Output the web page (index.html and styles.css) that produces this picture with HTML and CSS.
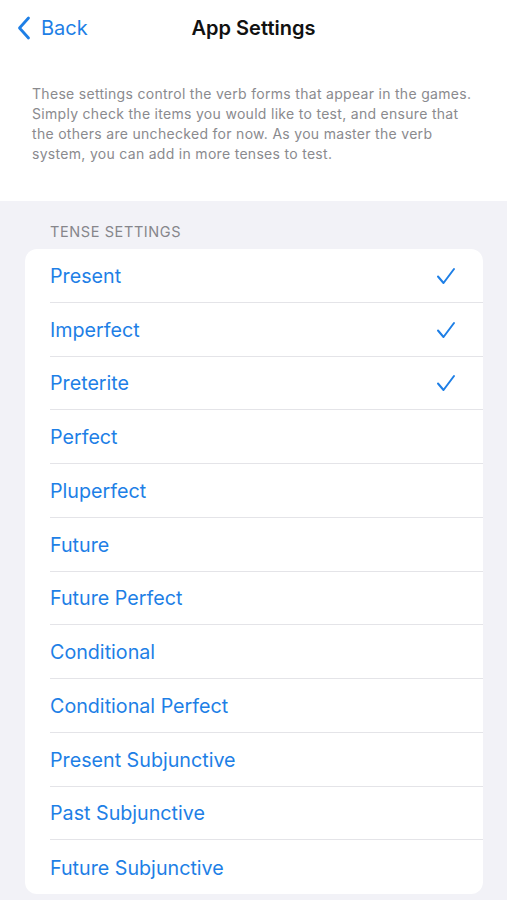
FILE: index.html
```html
<!DOCTYPE html>
<html>
<head>
<meta charset="utf-8">
<link rel="stylesheet" href="styles.css">
</head>
<body>
<div class="top">
  <nav class="nav">
    <a class="back">
      <svg class="chev" width="14" height="24" viewBox="0 0 14 24"><path d="M11.5 2 L2.5 12 L11.5 22" fill="none" stroke="currentColor" stroke-width="2.8" stroke-linecap="round" stroke-linejoin="round"/></svg>
      <span>Back</span>
    </a>
    <h1 class="title">App Settings</h1>
  </nav>
  <p class="desc">These settings control the verb forms that appear in the games.<br>Simply check the items you would like to test, and ensure that<br>the others are unchecked for now. As you master the verb<br>system, you can add in more tenses to test.</p>
</div>
<main class="content">
  <div class="section-title">TENSE SETTINGS</div>
  <ul class="list">
    <li class="row"><span>Present</span><svg class="check" width="20" height="18" viewBox="0 0 20 18"><path d="M2 9.5 L7.5 16 L18 2" fill="none" stroke="currentColor" stroke-width="2" stroke-linecap="round" stroke-linejoin="round"/></svg></li>
    <li class="row"><span>Imperfect</span><svg class="check" width="20" height="18" viewBox="0 0 20 18"><path d="M2 9.5 L7.5 16 L18 2" fill="none" stroke="currentColor" stroke-width="2" stroke-linecap="round" stroke-linejoin="round"/></svg></li>
    <li class="row"><span>Preterite</span><svg class="check" width="20" height="18" viewBox="0 0 20 18"><path d="M2 9.5 L7.5 16 L18 2" fill="none" stroke="currentColor" stroke-width="2" stroke-linecap="round" stroke-linejoin="round"/></svg></li>
    <li class="row"><span>Perfect</span></li>
    <li class="row"><span>Pluperfect</span></li>
    <li class="row"><span>Future</span></li>
    <li class="row"><span>Future Perfect</span></li>
    <li class="row"><span>Conditional</span></li>
    <li class="row"><span>Conditional Perfect</span></li>
    <li class="row"><span>Present Subjunctive</span></li>
    <li class="row"><span>Past Subjunctive</span></li>
    <li class="row"><span>Future Subjunctive</span></li>
  </ul>
</main>
</body>
</html>
```
FILE: styles.css
```css
* { box-sizing: border-box; }
html, body { margin: 0; padding: 0; }
body {
  width: 507px;
  height: 900px;
  overflow: hidden;
  background: #f2f2f7;
  font-family: Inter, "Noto Sans", sans-serif;
}
.top {
  background: #ffffff;
  height: 201px;
}
.nav {
  position: relative;
  height: 56px;
  display: flex;
  align-items: center;
}
.back {
  display: flex;
  align-items: center;
  color: #1e7fe6;
  font-size: 20px;
  padding-left: 17px;
  gap: 10px;
  margin-top: -1px;
}
.chev { display: block; }
.title {
  position: absolute;
  left: 0;
  right: 0;
  top: 0;
  height: 56px;
  line-height: 56px;
  margin: 0;
  text-align: center;
  font-size: 20px;
  font-weight: 600;
  color: #111;
}
.desc {
  margin: 28px 0 0;
  padding: 0 20px 0 32px;
  font-size: 14px;
  letter-spacing: 0.3px;
  line-height: 20px;
  color: #8a8a8e;
  white-space: nowrap;
}
.content {
  padding: 21px 24px 0 25px;
}
.section-title {
  padding-left: 25px;
  font-size: 14.5px;
  color: #86868b;
  letter-spacing: 0.6px;
  line-height: 20px;
  margin-bottom: 7px;
}
.list {
  list-style: none;
  margin: 0;
  padding: 0;
  background: #fff;
  border-radius: 12px;
  overflow: hidden;
}
.row {
  height: 53.75px;
  margin-left: 25px;
  padding-right: 27px;
  padding-top: 1px;
  display: flex;
  align-items: center;
  justify-content: space-between;
  color: #1e7fe6;
  font-size: 19.7px;
  border-bottom: 1px solid #e4e4e8;
}
.row:last-child { border-bottom: none; }
.check { color: #1e7fe6; display: block; }
```
